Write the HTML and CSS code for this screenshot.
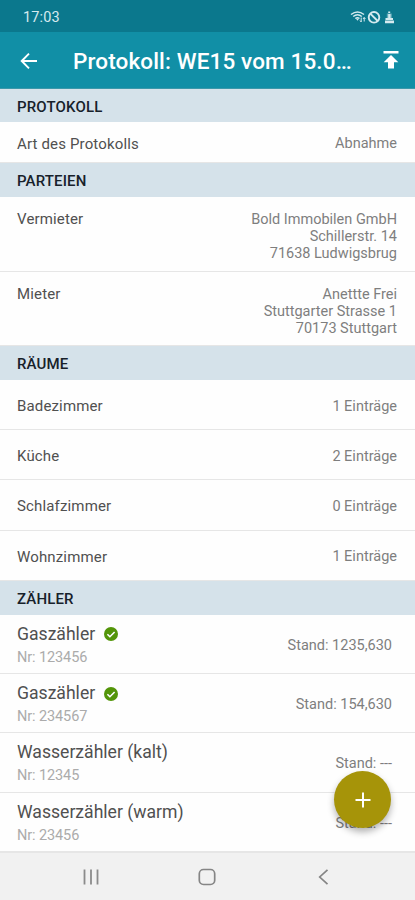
FILE: index.html
```html
<!DOCTYPE html>
<html lang="de">
<head>
<meta charset="utf-8">
<meta name="viewport" content="width=device-width">
<title>Protokoll</title>
<link rel="stylesheet" href="styles.css">
</head>
<body>
<div class="status">
  <span class="clock">17:03</span>
  <svg class="status-icons" width="46" height="16" viewBox="0 0 46 16" fill="none" stroke="#d5eaef">
    <path d="M1 5.5Q7.500 0.500 14 5.500M3.200 7.500Q7.500 4 11.800 7.500M5.300 9.500Q7.500 7.800 9.500 9.500" stroke-width="1.500"/>
    <path d="M7.500 11.800l-1.500-2h3z" fill="#d5eaef" stroke="none"/>
    <path d="M11.200 8.500v4.500M14.200 12.500V8.500M10 11.500l1.200 1.500M13 10l1.200-1.500 1.200 1.500" stroke-width="1"/>
    <circle cx="24" cy="8.300" r="5.300" stroke-width="1.900"/>
    <path d="M20.300 4.600l7.400 7.400" stroke-width="1.900"/>
    <path d="M36.800 4.500h5v6h-5z" fill="#5fa9b7" stroke="none"/>
    <path d="M38.200 2.500h2v1.500h-2zM38.200 5h2.300v4h2.500v2h-7.500v-2h2.700zM35 11.500h9v2.700h-9z" fill="#d5eaef" stroke="none"/>
  </svg>
</div>
<header class="appbar">
  <svg class="back" width="18" height="18" viewBox="0 0 18 18" fill="none" stroke="#fff" stroke-width="1.900"><path d="M17 9H2M9 1.700L1.700 9L9 16.300"/></svg>
  <h1>Protokoll: WE15 vom 15.0…</h1>
  <svg class="upload" width="16" height="18" viewBox="0 0 16 18" fill="#fff"><path d="M.5 0h15v2.400H.500zM8 4l7.300 7.300H11V17.500H5v-6.200H.700z"/></svg>
</header>
<main>
  <h2 class="first">PROTOKOLL</h2>
  <div class="row type"><span>Art des Protokolls</span><span class="value">Abnahme</span></div>
  <h2>PARTEIEN</h2>
  <div class="row party"><span>Vermieter</span><span class="value">Bold Immobilen GmbH<br>Schillerstr. 14<br>71638 Ludwigsbrug</span></div>
  <div class="row party"><span>Mieter</span><span class="value">Anettte Frei<br>Stuttgarter Strasse 1<br>70173 Stuttgart</span></div>
  <h2>RÄUME</h2>
  <div class="row room"><span>Badezimmer</span><span class="value">1 Einträge</span></div>
  <div class="row room"><span>Küche</span><span class="value">2 Einträge</span></div>
  <div class="row room"><span>Schlafzimmer</span><span class="value">0 Einträge</span></div>
  <div class="row room"><span>Wohnzimmer</span><span class="value">1 Einträge</span></div>
  <h2>ZÄHLER</h2>
  <div class="row meter">
    <div><div class="name">Gaszähler<svg class="check" width="14" height="14" viewBox="0 0 14 14"><circle cx="7" cy="7" r="7" fill="#539509"/><path d="M3.400 7.200l2.500 2.500 4.700-4.700" fill="none" stroke="#fff" stroke-width="1.600"/></svg></div><div class="nr">Nr: 123456</div></div>
    <span class="value">Stand: 1235,630</span>
  </div>
  <div class="row meter">
    <div><div class="name">Gaszähler<svg class="check" width="14" height="14" viewBox="0 0 14 14"><circle cx="7" cy="7" r="7" fill="#539509"/><path d="M3.400 7.200l2.500 2.500 4.700-4.700" fill="none" stroke="#fff" stroke-width="1.600"/></svg></div><div class="nr">Nr: 234567</div></div>
    <span class="value">Stand: 154,630</span>
  </div>
  <div class="row meter">
    <div><div class="name">Wasserzähler (kalt)</div><div class="nr">Nr: 12345</div></div>
    <span class="value">Stand: ---</span>
  </div>
  <div class="row meter">
    <div><div class="name">Wasserzähler (warm)</div><div class="nr">Nr: 23456</div></div>
    <span class="value">Stand: ---</span>
  </div>
</main>
<nav>
  <svg width="18" height="16" viewBox="0 0 18 16" stroke="#8b8b8b" stroke-width="1.800"><path d="M2.500 0.500v15M9 0.500v15M15.500 0.500v15"/></svg>
  <svg width="18" height="18" viewBox="0 0 18 18" fill="none" stroke="#858585" stroke-width="1.700"><rect x="1.300" y="1.500" width="15.400" height="15" rx="4.200"/></svg>
  <svg width="18" height="18" viewBox="0 0 18 18" fill="none" stroke="#858585" stroke-width="1.700"><path d="M13.500 1.800L5.700 9l7.800 7.200"/></svg>
</nav>
<button class="fab" aria-label="Hinzufügen"><svg width="16" height="16" viewBox="0 0 16 16" stroke="#fff" stroke-width="2"><path d="M8 .5v15M.500 8h15"/></svg></button>
</body>
</html>
```
FILE: styles.css
```css
* { box-sizing: border-box; }
body {
  margin: 0;
  height: 900px;
  display: flex;
  flex-direction: column;
  position: relative;
  overflow: hidden;
  background: #fefefe;
  color: #505050;
  font-family: Roboto, "Liberation Sans", sans-serif;
  font-size: 15px;
  letter-spacing: 0.15px;
}
.status {
  height: 32px;
  flex: none;
  display: flex;
  align-items: center;
  justify-content: space-between;
  padding: 2px 19px 0 23px;
  background: #0b788d;
}
.clock { color: #d5eaef; font-size: 14.5px; }
.appbar {
  height: 57px;
  flex: none;
  display: flex;
  align-items: center;
  padding: 0 16px 0 20px;
  background: #118fa6;
  border-bottom: 1px solid #3b98aa;
}
.back { margin-top: 1px; }
h1 {
  flex: 1;
  margin: 2px 0 0 35px;
  color: #fff;
  font-size: 22.5px;
  font-weight: 500;
  letter-spacing: 0.13px;
  white-space: nowrap;
}
main { height: 761.5px; flex: none; }
h2 {
  height: 34px;
  margin: 0;
  padding: 2px 17px 0;
  display: flex;
  align-items: center;
  background: #d5e2ea;
  color: #17212a;
  font-size: 15px;
  font-weight: 500;
}
h2.first { height: 33px; }
.row {
  display: flex;
  justify-content: space-between;
  align-items: center;
  padding: 0 18px 0 17px;
  border-bottom: 1px solid #e6e6e6;
}
.value {
  color: #7e7e7e;
  font-size: 14.5px;
  letter-spacing: 0;
  text-align: right;
}
.type { height: 41px; padding-top: 3px; }
.party { height: 74.5px; align-items: flex-start; padding-top: 14px; line-height: 17.2px; }
.room { height: 50.2px; padding-top: 3px; }
.meter { height: 59.3px; padding-top: 3px; padding-right: 23px; }
.name {
  display: flex;
  align-items: center;
  font-size: 17.6px;
  letter-spacing: 0;
  line-height: 24px;
}
.check { margin-left: 9px; margin-top: 1px; }
.nr { color: #ababab; font-size: 14.5px; letter-spacing: -0.1px; line-height: 23px; }
nav {
  height: 49.5px;
  flex: none;
  display: flex;
  align-items: center;
  justify-content: space-between;
  padding: 1px 83px 0 82px;
  background: #f1f1f1;
  border-top: 2px solid #e6e6e6;
}
.fab {
  position: absolute;
  left: 334px;
  top: 771px;
  width: 57px;
  height: 57px;
  padding: 0;
  display: flex;
  align-items: center;
  justify-content: center;
  border: 0;
  border-radius: 50%;
  background: #a69409;
  box-shadow: 0 4px 7px rgba(0, 0, 0, 0.3);
}
```
